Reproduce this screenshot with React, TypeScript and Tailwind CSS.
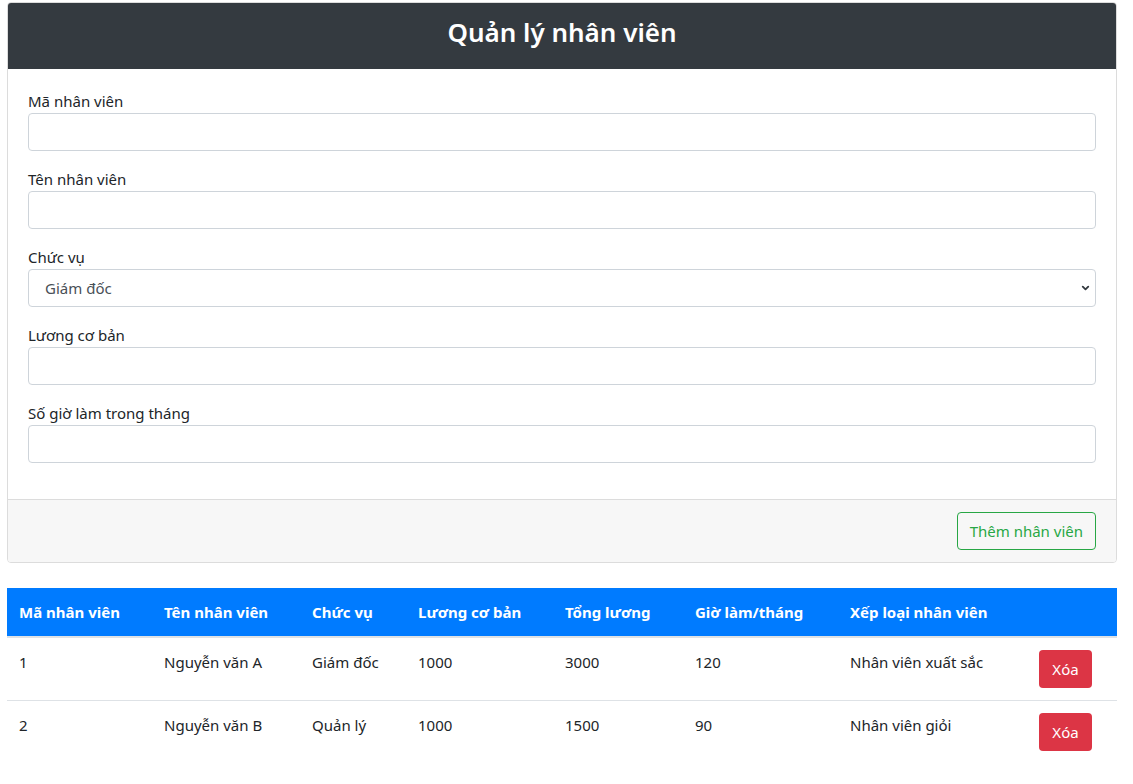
import { ChevronDown } from "lucide-react"

const employees = [
  { id: "1", name: "Nguyễn văn A", role: "Giám đốc", base: "1000", total: "3000", hours: "120", rank: "Nhân viên xuất sắc" },
  { id: "2", name: "Nguyễn văn B", role: "Quản lý", base: "1000", total: "1500", hours: "90", rank: "Nhân viên giỏi" },
]

function Field({ label }: { label: string }) {
  return (
    <div className="mb-4">
      <label className="block leading-6">{label}</label>
      <input
        type="text"
        className="block w-full h-[38px] px-3 rounded border border-[#ced4da] bg-white focus:outline-none"
      />
    </div>
  )
}

export default function App() {
  return (
    <div className="min-h-screen bg-white text-[#212529] text-[15px] font-['Noto_Sans',sans-serif] pt-[2px] pl-[7px] pr-[16px] pb-6">
      {/* Form card */}
      <div className="border border-[#dcdcdc] rounded overflow-hidden">
        <div className="bg-[#343a40] text-white text-center pt-[13px] pb-5">
          <h3 className="text-[26px] font-semibold leading-[33px]">Quản lý nhân viên</h3>
        </div>

        <div className="px-5 pt-5 pb-5">
          <Field label="Mã nhân viên" />
          <Field label="Tên nhân viên" />

          <div className="mb-4">
            <label className="block leading-6">Chức vụ</label>
            <div className="relative">
              <select className="block w-full h-[38px] pl-4 pr-8 rounded border border-[#ced4da] bg-white text-[#495057] appearance-none focus:outline-none">
                <option>Giám đốc</option>
                <option>Quản lý</option>
                <option>Nhân viên</option>
              </select>
              <ChevronDown className="absolute right-[5px] top-1/2 -translate-y-1/2 w-[11px] h-[11px] text-[#343a40] pointer-events-none" strokeWidth={4} />
            </div>
          </div>

          <Field label="Lương cơ bản" />
          <Field label="Số giờ làm trong tháng" />
        </div>

        <div className="bg-[#f7f7f7] border-t border-[#dcdcdc] px-5 py-3 flex justify-end">
          <button className="h-[38px] px-3 rounded border border-[#28a745] text-[#28a745] bg-transparent">
            Thêm nhân viên
          </button>
        </div>
      </div>

      {/* Employee table */}
      <table className="w-full table-fixed mt-[25px] text-left border-collapse">
        <thead>
          <tr className="bg-[#007bff] text-white">
            <th className="w-[145px] px-3 py-3 font-bold leading-6 border-b-2 border-[#dee2e6]">Mã nhân viên</th>
            <th className="w-[148px] px-3 py-3 font-bold leading-6 border-b-2 border-[#dee2e6]">Tên nhân viên</th>
            <th className="w-[106px] px-3 py-3 font-bold leading-6 border-b-2 border-[#dee2e6]">Chức vụ</th>
            <th className="w-[147px] px-3 py-3 font-bold leading-6 border-b-2 border-[#dee2e6]">Lương cơ bản</th>
            <th className="w-[130px] px-3 py-3 font-bold leading-6 border-b-2 border-[#dee2e6]">Tổng lương</th>
            <th className="w-[155px] px-3 py-3 font-bold leading-6 border-b-2 border-[#dee2e6]">Giờ làm/tháng</th>
            <th className="w-[189px] px-3 py-3 font-bold leading-6 border-b-2 border-[#dee2e6]">Xếp loại nhân viên</th>
            <th className="px-3 py-3 border-b-2 border-[#dee2e6]"></th>
          </tr>
        </thead>
        <tbody>
          {employees.map((e, i) => (
            <tr key={e.id} className={i > 0 ? "border-t border-[#dee2e6]" : ""}>
              <td className="px-3 py-3 align-top leading-6">{e.id}</td>
              <td className="px-3 py-3 align-top leading-6">{e.name}</td>
              <td className="px-3 py-3 align-top leading-6">{e.role}</td>
              <td className="px-3 py-3 align-top leading-6">{e.base}</td>
              <td className="px-3 py-3 align-top leading-6">{e.total}</td>
              <td className="px-3 py-3 align-top leading-6">{e.hours}</td>
              <td className="px-3 py-3 align-top leading-6">{e.rank}</td>
              <td className="px-3 py-3 align-top">
                <button className="h-[38px] w-[53px] rounded bg-[#dc3545] text-white">Xóa</button>
              </td>
            </tr>
          ))}
        </tbody>
      </table>
    </div>
  )
}
